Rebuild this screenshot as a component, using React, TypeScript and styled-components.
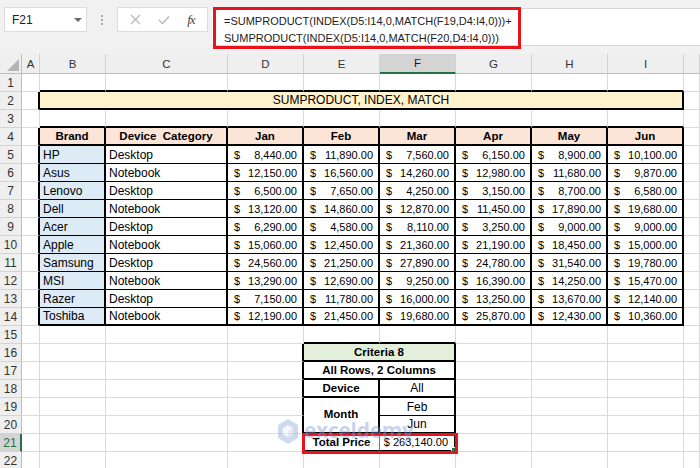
import React from 'react';
import styled, { createGlobalStyle } from 'styled-components';

const GlobalStyle = createGlobalStyle`
  html, body { margin: 0; padding: 0; background: #ffffff; }
  body { font-family: "Liberation Sans", Arial, sans-serif; }
  #root { width: 700px; height: 468px; }
`;

const Root = styled.div`
  position: relative;
  width: 700px;
  height: 468px;
  overflow: hidden;
  background: #f1f1f1;
  display: flex;
  flex-direction: column;
`;

const FormulaBar = styled.div`
  flex: none;
  height: 54px;
  box-sizing: border-box;
  padding-top: 7px;
  display: flex;
  align-items: flex-start;
`;

const NameBox = styled.div`
  margin-left: 4px;
  width: 83px;
  height: 25px;
  box-sizing: border-box;
  background: #fff;
  border: 1px solid #dcdcdc;
  display: flex;
  align-items: center;
  justify-content: space-between;
  padding: 0 4px 0 7px;
  font-size: 12px;
  color: #222;
`;

const Caret = styled.span`
  width: 0;
  height: 0;
  border-left: 4px solid transparent;
  border-right: 4px solid transparent;
  border-top: 4px solid #6a6a6a;
`;

const Dots = styled.div`
  width: 30px;
  height: 25px;
  display: flex;
  flex-direction: column;
  align-items: center;
  justify-content: center;
  gap: 2px;
  span {
    width: 2px;
    height: 2px;
    background: #a8a8a8;
  }
`;

const IconBox = styled.div`
  width: 91px;
  height: 25px;
  box-sizing: border-box;
  background: #fff;
  border: 1px solid #dcdcdc;
  display: flex;
  align-items: center;
  justify-content: space-around;
  padding: 0 4px;
`;

const Fx = styled.span`
  font-family: "Liberation Serif", "Times New Roman", serif;
  font-style: italic;
  font-size: 13px;
  color: #444;
  letter-spacing: -1px;
`;

const FormulaBox = styled.div`
  margin-left: 4px;
  margin-top: 1px;
  flex: 1;
  height: 38px;
  background: #fff;
  border-top: 1px solid #d6d6d6;
  border-bottom: 1px solid #d6d6d6;
  box-sizing: border-box;
`;

const Annotation = styled.div`
  box-sizing: border-box;
  width: 308px;
  height: 42px;
  margin: -2px 0 0 1px;
  border: 3px solid #e8141c;
  padding: 3px 0 0 8px;
  font-size: 11px;
  line-height: 17px;
  color: #222;
  white-space: pre;
`;

const Sheet = styled.div`
  flex: 1;
  display: grid;
  grid-template-columns: 22px 18px 66px 122px repeat(6, 76px) 1fr;
  grid-template-rows: 20px repeat(22, 18px);
  background: #fff;
  overflow: hidden;
`;

const Corner = styled.div`
  background: #efefef;
  border-right: 1px solid #bdbdbd;
  border-bottom: 1px solid #bdbdbd;
  box-sizing: border-box;
  display: flex;
  align-items: flex-end;
  justify-content: flex-end;
  padding: 0 2px 2px 0;
`;

const ColHead = styled.div<{ $sel?: boolean }>`
  box-sizing: border-box;
  background: ${(p) => (p.$sel ? '#d4d4d4' : '#efefef')};
  border-right: 1px solid #d2d2d2;
  border-bottom: ${(p) => (p.$sel ? '2px solid #217346' : '1px solid #bdbdbd')};
  display: flex;
  align-items: center;
  justify-content: center;
  font-size: 11.5px;
  color: ${(p) => (p.$sel ? '#1f1f1f' : '#333')};
`;

const RowHead = styled.div<{ $sel?: boolean }>`
  box-sizing: border-box;
  background: ${(p) => (p.$sel ? '#d4d4d4' : '#efefef')};
  border-right: ${(p) => (p.$sel ? '2px solid #217346' : '1px solid #bdbdbd')};
  border-bottom: 1px solid #d4d4d4;
  display: flex;
  align-items: center;
  justify-content: center;
  font-size: 12px;
  color: ${(p) => (p.$sel ? '#217346' : '#333')};
`;

type Align = 'left' | 'center' | 'right' | 'between';

const Cell = styled.div<{
  $r: string;
  $b: string;
  $bg?: string;
  $align?: Align;
  $bold?: boolean;
  $cs?: number;
  $rs?: number;
  $vc?: boolean;
  $size: number;
}>`
  position: relative;
  box-sizing: border-box;
  min-width: 0;
  border-right: ${(p) => p.$r};
  border-bottom: ${(p) => p.$b};
  background: ${(p) => p.$bg || '#fff'};
  grid-column: span ${(p) => p.$cs || 1};
  grid-row: span ${(p) => p.$rs || 1};
  display: flex;
  align-items: ${(p) => (p.$vc ? 'center' : 'flex-end')};
  justify-content: ${(p) =>
    p.$align === 'center'
      ? 'center'
      : p.$align === 'right'
      ? 'flex-end'
      : p.$align === 'between'
      ? 'space-between'
      : 'flex-start'};
  padding: ${(p) => (p.$align === 'between' ? '0 5px 1px 6px' : p.$align === 'right' ? '0 6px 1px 3px' : '0 3px 1px 3px')};
  font-size: ${(p) => p.$size}px;
  line-height: 13px;
  font-weight: ${(p) => (p.$bold ? 700 : 400)};
  color: #000;
  white-space: pre;
`;

const Handle = styled.span`
  position: absolute;
  right: -4px;
  bottom: -4px;
  width: 5px;
  height: 5px;
  background: #217346;
  border: 1px solid #fff;
  z-index: 3;
`;

const RedBox = styled.div`
  position: absolute;
  left: 302px;
  top: 433px;
  width: 156px;
  height: 21px;
  box-sizing: border-box;
  border: 3px solid #e8141c;
  pointer-events: none;
  z-index: 4;
`;

const Watermark = styled.div`
  position: absolute;
  left: 278px;
  top: 419px;
  display: flex;
  align-items: flex-start;
  gap: 6px;
  opacity: 0.42;
  pointer-events: none;
  z-index: 5;
`;

const WmText = styled.div`
  display: flex;
  flex-direction: column;
  align-items: flex-start;
`;

const WmName = styled.span`
  font-family: "Open Sans", "Liberation Sans", sans-serif;
  font-weight: 700;
  font-size: 21px;
  line-height: 22px;
  color: #7f99d6;
  letter-spacing: -0.3px;
`;

const WmSub = styled.span`
  margin-left: 12px;
  font-family: "Open Sans", "Liberation Sans", sans-serif;
  font-size: 6px;
  line-height: 8px;
  letter-spacing: 2.5px;
  color: #9aa3b5;
`;

type Spec = {
  t?: string;
  bold?: boolean;
  align?: Align;
  bg?: string;
  cs?: number;
  rs?: number;
  vc?: boolean;
  size?: number;
  cur?: number;
  handle?: boolean;
};

const G = '1px solid #dadada';
const B2 = '2px solid #000';
const B1 = '1px solid #000';

function vB(r: number, c: number): string {
  if (r === 2 && (c === 0 || c === 8)) return B2;
  if (r >= 4 && r <= 14 && c >= 0 && c <= 8) return B2;
  if (r >= 16 && r <= 21 && (c === 3 || c === 5)) return B2;
  if (r >= 18 && r <= 20 && c === 4) return B2;
  if (r === 21 && c === 4) return '1px solid #4f8f62';
  return G;
}

function hB(r: number, c: number): string {
  if ((r === 1 || r === 2) && c >= 1 && c <= 8) return B2;
  if (c >= 1 && c <= 8) {
    if (r === 3 || r === 4 || r === 14) return B2;
    if (r >= 5 && r <= 13) return B1;
  }
  if (c === 4 || c === 5) {
    if (r >= 15 && r <= 21) {
      if (r === 19 && c === 5) return B1;
      return B2;
    }
  }
  return G;
}

const data: [string, string, number[]][] = [
  ['HP', 'Desktop', [8440, 11890, 7560, 6150, 8900, 10100]],
  ['Asus', 'Notebook', [12150, 16560, 14260, 12980, 11680, 9870]],
  ['Lenovo', 'Desktop', [6500, 7650, 4250, 3150, 8700, 6580]],
  ['Dell', 'Notebook', [13120, 14860, 12870, 11450, 17890, 19680]],
  ['Acer', 'Desktop', [6290, 4580, 8110, 3250, 9000, 9000]],
  ['Apple', 'Notebook', [15060, 12450, 21360, 21190, 18450, 15000]],
  ['Samsung', 'Desktop', [24560, 21250, 27890, 24780, 31540, 19780]],
  ['MSI', 'Notebook', [13290, 12690, 9250, 16390, 14250, 15470]],
  ['Razer', 'Desktop', [7150, 11780, 16000, 13250, 13670, 12140]],
  ['Toshiba', 'Notebook', [12190, 21450, 19680, 25870, 12430, 10360]],
];

const months = ['Jan', 'Feb', 'Mar', 'Apr', 'May', 'Jun'];
const cols = ['A', 'B', 'C', 'D', 'E', 'F', 'G', 'H', 'I', ''];

const fmt = (n: number) =>
  n.toLocaleString('en-US', { minimumFractionDigits: 2, maximumFractionDigits: 2 });

function buildGrid() {
  const g: Record<number, Record<number, Spec | 'skip'>> = {};
  const set = (r: number, c: number, s: Spec | 'skip') => {
    (g[r] ||= {})[c] = s;
  };
  set(2, 1, { t: 'SUMPRODUCT, INDEX, MATCH', align: 'center', bg: '#fff2cc', cs: 8, size: 12 });
  for (let c = 2; c <= 8; c++) set(2, c, 'skip');

  const head = '#fce4d6';
  set(4, 1, { t: 'Brand', bold: true, align: 'center', bg: head });
  set(4, 2, { t: 'Device  Category', bold: true, align: 'center', bg: head });
  months.forEach((m, i) => set(4, 3 + i, { t: m, bold: true, align: 'center', bg: head }));

  data.forEach(([brand, cat, vals], i) => {
    const r = 5 + i;
    set(r, 1, { t: brand, bg: '#ddebf7' });
    set(r, 2, { t: cat });
    vals.forEach((v, j) => set(r, 3 + j, { cur: v, align: 'between' }));
  });

  set(16, 4, { t: 'Criteria 8', bold: true, align: 'center', bg: '#e2efda', cs: 2 });
  set(16, 5, 'skip');
  set(17, 4, { t: 'All Rows, 2 Columns', bold: true, align: 'center', cs: 2 });
  set(17, 5, 'skip');
  set(18, 4, { t: 'Device', bold: true, align: 'center' });
  set(18, 5, { t: 'All', align: 'center' });
  set(19, 4, { t: 'Month', bold: true, align: 'center', rs: 2, vc: true });
  set(19, 5, { t: 'Feb', align: 'center' });
  set(20, 4, 'skip');
  set(20, 5, { t: 'Jun', align: 'center' });
  set(21, 4, { t: 'Total Price', bold: true, align: 'center' });
  set(21, 5, { t: '$ 263,140.00', align: 'right', size: 11, handle: true });
  return g;
}

const grid = buildGrid();

const XIcon = () => (
  <svg width="11" height="11" viewBox="0 0 11 11">
    <path d="M1 1 L10 10 M10 1 L1 10" stroke="#b9b9b9" strokeWidth="1.2" fill="none" />
  </svg>
);

const CheckIcon = () => (
  <svg width="12" height="10" viewBox="0 0 12 10">
    <path d="M1 5 L4.5 8.5 L11 1.5" stroke="#b9b9b9" strokeWidth="1.4" fill="none" />
  </svg>
);

const CornerTri = () => (
  <svg width="12" height="12" viewBox="0 0 12 12">
    <polygon points="12,0 12,12 0,12" fill="#b4b4b4" />
  </svg>
);

const Logo = () => (
  <svg width="20" height="26" viewBox="0 0 20 26">
    <polygon points="10,0 20,6 20,19 10,25 0,19 0,6" fill="#8ea6dd" />
    <polygon points="10,6 15,9 15,15 10,18 5,15 5,9" fill="#ffffff" opacity="0.85" />
    <polygon points="10,12 15,9 15,15 10,18" fill="#c4d0ee" />
  </svg>
);

export default function App() {
  const rows: React.ReactNode[] = [];
  for (let r = 1; r <= 22; r++) {
    rows.push(
      <RowHead key={`rh${r}`} $sel={r === 21}>
        {r}
      </RowHead>
    );
    for (let c = 0; c <= 9; c++) {
      const s = grid[r]?.[c];
      if (s === 'skip') continue;
      const spec: Spec = s || {};
      const cs = spec.cs || 1;
      const rs = spec.rs || 1;
      const right = vB(r, c + cs - 1);
      const bottom = hB(r + rs - 1, c);
      const size = spec.size ?? (spec.cur !== undefined ? 11 : spec.bold ? 11.5 : 12);
      rows.push(
        <Cell
          key={`c${r}-${c}`}
          $r={right}
          $b={bottom}
          $bg={spec.bg}
          $align={spec.align}
          $bold={spec.bold}
          $cs={spec.cs}
          $rs={spec.rs}
          $vc={spec.vc}
          $size={size}
        >
          {spec.cur !== undefined ? (
            <>
              <span>$</span>
              <span>{fmt(spec.cur)}</span>
            </>
          ) : (
            spec.t
          )}
          {spec.handle && <Handle />}
        </Cell>
      );
    }
  }

  return (
    <Root>
      <GlobalStyle />
      <FormulaBar>
        <NameBox>
          <span>F21</span>
          <Caret />
        </NameBox>
        <Dots>
          <span />
          <span />
          <span />
        </Dots>
        <IconBox>
          <XIcon />
          <CheckIcon />
          <Fx>fx</Fx>
        </IconBox>
        <FormulaBox>
          <Annotation>
            {'=SUMPRODUCT(INDEX(D5:I14,0,MATCH(F19,D4:I4,0)))+\nSUMPRODUCT(INDEX(D5:I14,0,MATCH(F20,D4:I4,0)))'}
          </Annotation>
        </FormulaBox>
      </FormulaBar>
      <Sheet>
        <Corner>
          <CornerTri />
        </Corner>
        {cols.map((c, i) => (
          <ColHead key={`ch${i}`} $sel={c === 'F'}>
            {c}
          </ColHead>
        ))}
        {rows}
      </Sheet>
      <Watermark>
        <Logo />
        <WmText>
          <WmName>exceldemy</WmName>
          <WmSub>EXCEL · DATA · BI</WmSub>
        </WmText>
      </Watermark>
      <RedBox />
    </Root>
  );
}
